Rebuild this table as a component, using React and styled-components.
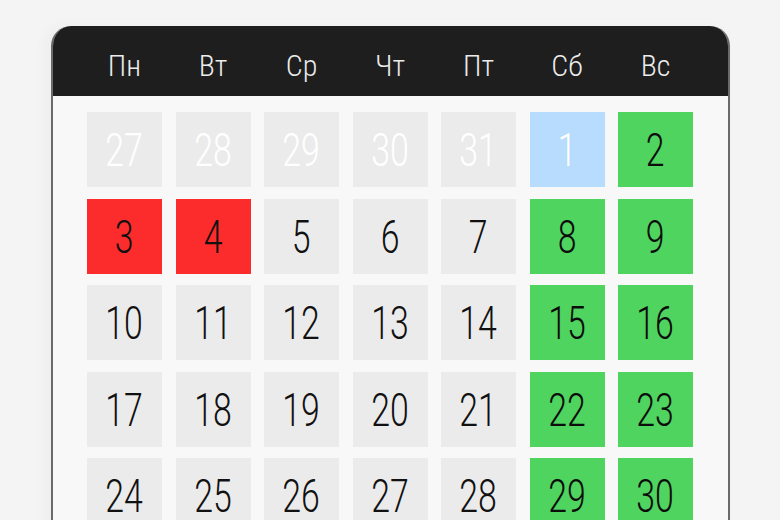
import React from "react";
import styled, { createGlobalStyle } from "styled-components";

const GlobalStyle = createGlobalStyle`
  html, body {
    margin: 0;
    padding: 0;
    background: #f4f4f4;
  }
  body {
    font-family: Roboto, "Liberation Sans", sans-serif;
    height: 520px;
    overflow: hidden;
  }
`

const Card = styled.div`
  box-sizing: border-box;
  width: 679px;
  margin: 26px auto 0;
  border-radius: 20px 20px 0 0;
  border: 2px solid #6a6a6a;
  border-top: none;
  border-bottom: none;
  background: #f8f8f8;
  overflow: hidden;
  box-shadow: -6px 0 14px rgba(0, 0, 0, 0.03);
`

const Header = styled.div`
  background: #1e1e1e;
  height: 70px;
  margin: 0 -2px;
  padding: 0 36px 0 36.5px;
  display: grid;
  grid-template-columns: repeat(7, 75px);
  column-gap: 13.5px;
  align-items: center;
`

const DayName = styled.div`
  text-align: center;
  color: #ececec;
  font-size: 30px;
  font-weight: 350;
  font-stretch: 75%;
  padding-top: 8px;
`

// digits in the picture are narrower than Roboto's condensed cut
const Squeeze = styled.span`
  display: inline-block;
  transform: scaleX(0.72);
  transform-origin: center;
  white-space: nowrap;
`

const Grid = styled.div`
  padding: 16px 34px 0 34.5px;
  display: grid;
  grid-template-columns: repeat(7, 75px);
  grid-auto-rows: 75px;
  column-gap: 13.5px;
  row-gap: 11.5px;
`

const tones = {
  muted: { bg: "#ebebeb", fg: "#ffffff" },
  plain: { bg: "#ebebeb", fg: "#111111" },
  today: { bg: "#b7dcfd", fg: "#ffffff" },
  busy: { bg: "#fd2c2c", fg: "#111111" },
  free: { bg: "#4fd45f", fg: "#0c0c0c" },
}

const Cell = styled.div`
  background: ${p => tones[p.$tone].bg};
  color: ${p => tones[p.$tone].fg};
  display: flex;
  align-items: center;
  justify-content: center;
  font-size: 47px;
  font-weight: 350;
  line-height: 1;
`

const days = ["Пн", "Вт", "Ср", "Чт", "Пт", "Сб", "Вс"]

const cells = [
  [27, "muted"], [28, "muted"], [29, "muted"], [30, "muted"], [31, "muted"], [1, "today"], [2, "free"],
  [3, "busy"], [4, "busy"], [5, "plain"], [6, "plain"], [7, "plain"], [8, "free"], [9, "free"],
  [10, "plain"], [11, "plain"], [12, "plain"], [13, "plain"], [14, "plain"], [15, "free"], [16, "free"],
  [17, "plain"], [18, "plain"], [19, "plain"], [20, "plain"], [21, "plain"], [22, "free"], [23, "free"],
  [24, "plain"], [25, "plain"], [26, "plain"], [27, "plain"], [28, "plain"], [29, "free"], [30, "free"],
]

const App = () => (
  <>
    <GlobalStyle />
    <Card>
      <Header>
        {days.map(d => (
          <DayName key={d}>{d}</DayName>
        ))}
      </Header>
      <Grid>
        {cells.map(([n, tone], i) => (
          <Cell key={i} $tone={tone}>
            <Squeeze>{n}</Squeeze>
          </Cell>
        ))}
      </Grid>
    </Card>
  </>
)

export default App
